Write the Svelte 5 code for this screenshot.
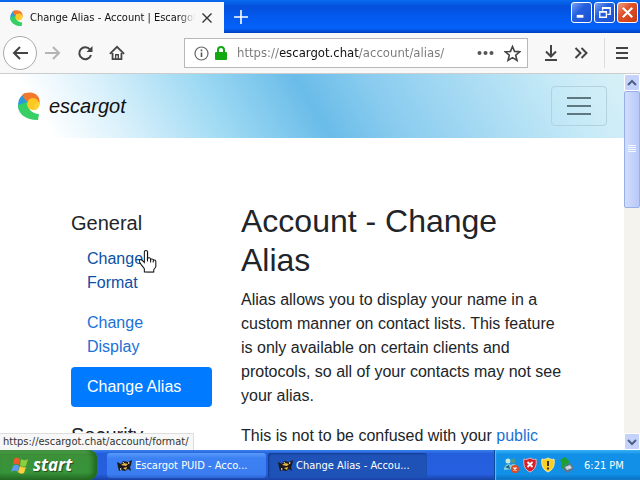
<script lang="ts">
  type Task = { title: string; active: boolean };
  type NavLink = { label: string; href: string; state: string };

  const tasks: Task[] = [
    { title: 'Escargot PUID - Acco...', active: false },
    { title: 'Change Alias - Accou...', active: true }
  ];

  const links: NavLink[] = [
    { label: 'Change Format', href: '#format', state: 'hovered' },
    { label: 'Change Display', href: '#display', state: '' },
    { label: 'Change Alias', href: '#alias', state: 'current' }
  ];

  let address = $state('https://escargot.chat/account/alias/');
</script>

{#snippet logo()}
  <svg class="logo" viewBox="0 0 22 28" aria-hidden="true">
    <path d="M0 14C0 7 3 3 8 1l4 6-3 8-8 3z" fill="#2b9bdc" />
    <path d="M4 3C9-1 18 0 21 6l1 6-6-2c-2-2-5-2-8-1z" fill="#f2792c" />
    <path d="M0 13c0 8 6 15 20 15l1-6c-4 0-7-2-9-4-2-3-3-5-3-8z" fill="#35cf63" />
    <circle cx="15" cy="12" r="6" fill="#fdc820" />
    <path d="M15 18c4 1 7-3 7-8l-5 1z" fill="#fcd238" />
  </svg>
{/snippet}

<div class="desktop">
  <header class="titlebar">
    <div class="tab">
      {@render logo()}
      <span class="tab-title">Change Alias - Account | Escargot</span>
      <button class="plain" aria-label="Close tab">
        <svg width="12" height="12" viewBox="0 0 12 12"><path d="M1.500 1.500l9 9M10.500 1.500l-9 9" stroke="#333" stroke-width="1.4" /></svg>
      </button>
    </div>
    <button class="plain new-tab" aria-label="New tab">
      <svg width="14" height="14" viewBox="0 0 14 14"><path d="M7 0v14M0 7h14" stroke="#fff" stroke-width="1.6" /></svg>
    </button>
    <div class="window-buttons">
      <button aria-label="Minimize"><svg viewBox="0 0 20 20"><path d="M5 14h7" stroke="#fff" stroke-width="3" /></svg></button>
      <button aria-label="Restore">
        <svg viewBox="0 0 20 20" fill="none" stroke="#fff" stroke-width="1.4">
          <path d="M8 8V5h8v7h-3M8 5.5h8" />
          <path d="M5 9h7v6H5zM5 9.500h7" />
        </svg>
      </button>
      <button class="close" aria-label="Close"><svg viewBox="0 0 20 20"><path d="M5 5l10 10M15 5L5 15" stroke="#fff" stroke-width="2.2" /></svg></button>
    </div>
  </header>

  <div class="toolbar">
    <button class="plain back" aria-label="Back">
      <svg width="18" height="16" viewBox="0 0 18 16"><path d="M17 8H3M9 2L3 8l6 6" /></svg>
    </button>
    <button class="plain dim" aria-label="Forward">
      <svg width="16" height="16" viewBox="0 0 16 16"><path d="M0 8h14M8 2l6 6-6 6" /></svg>
    </button>
    <button class="plain" aria-label="Reload">
      <svg width="16" height="16" viewBox="0 0 16 16">
        <path d="M13 4.500A6 6 0 1 0 14 10" />
        <path d="M15.500 1v6h-6z" fill="#444" stroke="none" />
      </svg>
    </button>
    <button class="plain" aria-label="Home">
      <svg width="16" height="18" viewBox="0 0 18 18">
        <path d="M1 10L9 2l8 8M4 9v7h10V9" />
        <path d="M7.500 16v-5h3v5" stroke-width="1.500" />
      </svg>
    </button>
    <div class="address">
      <svg width="15" height="15" viewBox="0 0 15 15" aria-hidden="true">
        <circle cx="7.500" cy="7.500" r="6.500" stroke="#666" stroke-width="1.200" fill="none" />
        <path d="M7.500 6.500v4.500M7.500 3.500v1.800" stroke="#555" stroke-width="1.600" />
      </svg>
      <svg width="12" height="14" viewBox="0 0 12 14" aria-hidden="true">
        <path d="M3 7V4a3 3 0 0 1 6 0v3" stroke="#12a812" stroke-width="2" fill="none" />
        <rect x="0" y="6" width="12" height="8" rx="1" fill="#12a812" />
      </svg>
      <input type="text" aria-label="Address" bind:value={address} />
      <button class="plain" aria-label="Page actions">
        <svg width="17" height="6" viewBox="0 0 17 6"><g fill="#555" stroke="none"><circle cx="2.500" cy="3" r="2" /><circle cx="8.500" cy="3" r="2" /><circle cx="14.500" cy="3" r="2" /></g></svg>
      </button>
      <button class="plain" aria-label="Bookmark this page">
        <svg width="17" height="17" viewBox="0 0 17 17"><path stroke-width="1.600" d="M8.500 1.500l2 4.900 5.200.400-4 3.400 1.300 5.200-4.500-2.800L4 15.400l1.300-5.200-4-3.400 5.200-.4z" /></svg>
      </button>
    </div>
    <button class="plain" aria-label="Downloads">
      <svg width="14" height="16" viewBox="0 0 14 16"><path d="M7 0v11M2 6.500l5 5 5-5M1 15h12" /></svg>
    </button>
    <button class="plain" aria-label="More tools">
      <svg width="14" height="14" viewBox="0 0 14 14"><path d="M1.500 2l5 5-5 5M7.500 2l5 5-5 5" /></svg>
    </button>
    <button class="plain menu" aria-label="Menu">
      <svg width="12" height="14" viewBox="0 0 12 14"><path d="M0 2h12M0 7h12M0 12h12" /></svg>
    </button>
  </div>

  <div class="viewport">
    <div class="page">
      <nav class="navbar">
        <a class="brand" href="#home">{@render logo()}<span>escargot</span></a>
        <button class="toggler" aria-label="Toggle navigation">
          <svg width="24" height="20" viewBox="0 0 24 20"><path d="M0 2h24M0 10h24M0 18h24" stroke="#5f7880" stroke-width="2" /></svg>
        </button>
      </nav>
      <div class="container">
        <aside>
          <h5>General</h5>
          {#each links as link}
            <a class={['nav-link', link.state]} href={link.href}>{link.label}</a>
          {/each}
          <h5 class="next">Security</h5>
        </aside>
        <main>
          <h2>Account - Change Alias</h2>
          <p>
            Alias allows you to display your name in a custom manner on contact lists. This feature is only
            available on certain clients and protocols, so all of your contacts may not see your alias.
          </p>
          <p>This is not to be confused with your <a href="#public">public</a></p>
        </main>
      </div>
      <div class="status">https://escargot.chat/account/format/</div>
    </div>
    <div class="scrollbar">
      <button aria-label="Scroll up"><svg viewBox="0 0 14 14"><path d="M3 9l4-4 4 4" /></svg></button>
      <div class="thumb"><svg width="8" height="8" viewBox="0 0 8 8"><path d="M0 .5h8M0 2.500h8M0 4.500h8M0 6.500h8" stroke="#f4f8ff" /></svg></div>
      <button class="down" aria-label="Scroll down"><svg viewBox="0 0 14 14"><path d="M3 5l4 4 4-4" /></svg></button>
    </div>
  </div>

  <footer class="taskbar">
    <button class="start">
      <svg width="18" height="17" viewBox="0 0 18 17" aria-hidden="true">
        <path d="M3 2c2-2 4-1 6 0L8 8C6 7 4 6 2 8z" fill="#ee5a2a" />
        <path d="M10 2c2 1 4 2 7 0l-2 7c-2 1-4 1-6-1z" fill="#8ccf3c" />
        <path d="M2 9c2-2 4-1 6 0l-1 6c-2-1-4-2-7 0z" fill="#5f9bf5" />
        <path d="M9 9c2 1 4 2 6 1l-2 6c-2 1-4 1-6-1z" fill="#fbd03c" />
      </svg>
      <span>start</span>
    </button>
    <div class="tasks">
      {#each tasks as task}
        <button class="task" class:active={task.active}>
          <svg width="15" height="13" viewBox="0 0 15 13" aria-hidden="true">
            <path d="M0 3l4 2 2-3 5 1 4-2-1 5-1 2 1 4-3-2-3 2-4-1-2 1-1-4z" fill="#1b1a18" />
            <path d="M4 6l3-2 4 1-2 2zM6 9l4-1-1 3z" fill="#e9b64a" />
            <path d="M11 3l2 1-2 1zM3 9l2 1-2 1zM5 4l2-1v1z" fill="#f5ead0" />
          </svg>
          <span>{task.title}</span>
        </button>
      {/each}
    </div>
    <div class="tray">
      <svg width="16" height="16" viewBox="0 0 16 16" aria-hidden="true">
        <circle cx="5" cy="4" r="2.500" fill="#c7e8d8" />
        <circle cx="10" cy="4" r="2.500" fill="#4d9a8a" />
        <path d="M1 13c0-7 8-8 9-1zM7 10c1-4 6-4 7 0z" fill="#8fd0d8" />
        <path d="M2 10l4-2 1 4z" fill="#235b78" />
        <circle cx="12" cy="12" r="4" fill="#e04a22" />
        <path d="M10.500 10.500l3 3M13.500 10.500l-3 3" stroke="#fff" stroke-width="1.300" />
      </svg>
      <svg width="14" height="16" viewBox="0 0 14 16" aria-hidden="true">
        <path d="M7 1c2 1 4 2 6 1 1 6-1 11-6 13C2 13 0 8 1 2c2 1 4 0 6-1z" fill="#d8202a" stroke="#f0b0b0" />
        <path d="M4.500 5l5 5M9.500 5l-5 5" stroke="#fff" stroke-width="1.800" />
      </svg>
      <svg width="14" height="16" viewBox="0 0 14 16" aria-hidden="true">
        <path d="M7 1c2 1 4 2 6 1 1 6-1 11-6 13C2 13 0 8 1 2c2 1 4 0 6-1z" fill="#fbcf22" stroke="#f5eaa8" />
        <path d="M7 4v5M7 10.500v2" stroke="#333" stroke-width="2" />
      </svg>
      <svg width="15" height="16" viewBox="0 0 15 16" aria-hidden="true">
        <path d="M3 10l9-4 3 6-8 4z" fill="#62748c" />
        <path d="M6 10l5-2 2 3-5 2z" fill="#cdd6e0" />
        <path d="M1 3l5-3 4 4-1 5-3-2-1 5-3-1 1-5z" fill="#1fa02e" />
      </svg>
      <time>6:21 PM</time>
    </div>
  </footer>

  <svg class="pointer" width="18" height="24" viewBox="0 0 17 23" aria-hidden="true">
    <path d="M7 22v-3l-3-4-3-4c0-2 2-2 3-1l2 2V2c0-2 3-2 3 0v6c1-1 2-1 3 1 1-1 2 0 2 1 1-1 2 0 2 1v5l-2 3v3z" fill="#888" opacity="0.500" />
    <path d="M5 21v-3l-3-4-2-3c0-2 2-2 3-1l2 2V2c0-2 3-2 3 0v6c1-1 3-1 3 1 1-1 3 0 3 1 1-1 2 0 2 1v5l-2 3v2z" fill="#fff" stroke="#111" />
    <path d="M8 7v4M11 9v3M13.500 10v2" stroke="#111" />
  </svg>
</div>

<style>
  :global(body) {
    margin: 0;
  }

  .desktop {
    position: relative;
    display: flex;
    flex-direction: column;
    height: 100vh;
    overflow: hidden;
    font-family: 'DejaVu Sans Condensed', Tahoma, sans-serif;
    font-size: 11px;
  }

  button {
    font: inherit;
    padding: 0;
    box-sizing: border-box;
  }

  svg {
    display: block;
    flex-shrink: 0;
  }

  .plain {
    display: grid;
    place-items: center;
    border: 0;
    background: none;
  }

  /* Title bar */
  .titlebar {
    display: flex;
    height: 33px;
    flex-shrink: 0;
    background: linear-gradient(#0a6cf0, #0450dc 20%, #0359ee 50%, #0462fb 85%, #003fc0);
  }

  .tab {
    display: flex;
    align-items: center;
    gap: 6px;
    width: 224px;
    box-sizing: border-box;
    margin-top: 2px;
    padding: 0 11px 0 9px;
    background: #f8f8f8;
  }

  .tab .logo {
    width: 15px;
    height: 16px;
  }

  .tab-title {
    flex: 1;
    min-width: 0;
    overflow: hidden;
    white-space: nowrap;
    color: #111;
    mask-image: linear-gradient(to right, #000 90%, transparent);
  }

  .new-tab {
    width: 34px;
  }

  .window-buttons {
    display: flex;
    gap: 2px;
    margin: 2px 2px 0 auto;
  }

  .window-buttons button {
    width: 21px;
    height: 21px;
    border: 1px solid #fff;
    border-radius: 3px;
    background: linear-gradient(135deg, #7aa2f5, #2560e0 40%, #1a4fd0);
  }

  .window-buttons .close {
    background: linear-gradient(135deg, #f0a080, #e0522a 40%, #c83a10);
  }

  /* Browser toolbar */
  .toolbar {
    display: flex;
    align-items: center;
    height: 41px;
    box-sizing: border-box;
    flex-shrink: 0;
    gap: 16px;
    padding: 0 12px 0 3px;
    border-bottom: 1px solid #ccc;
    background: #f8f8f8;
  }

  .toolbar .plain svg {
    fill: none;
    stroke: #444;
    stroke-width: 2;
  }

  .toolbar .dim svg {
    stroke: #b5b5b5;
  }

  .toolbar .back {
    width: 34px;
    height: 34px;
    margin-right: -8px;
    border: 1px solid #aaa;
    border-radius: 50%;
    background: #fff;
  }

  .address {
    flex: 1;
    min-width: 0;
    display: flex;
    align-items: center;
    gap: 6px;
    height: 30px;
    box-sizing: border-box;
    margin-left: 43px;
    padding: 0 6px 0 9px;
    border: 1px solid #b8b8b8;
    background: #fff;
  }

  .address input {
    flex: 1;
    min-width: 0;
    margin-left: 4px;
    padding: 0;
    border: 0;
    outline: 0;
    font-family: inherit;
    font-size: 13px;
    line-height: 20px;
    color: transparent;
    /* the host name is darker than the rest of the address */
    background: linear-gradient(to right, #777 43px, #111 43px, #111 122px, #777 122px);
    background-clip: text;
  }

  .address .plain {
    margin-left: 4px;
  }

  .menu {
    height: 30px;
    padding-left: 11px;
    border-left: 1px solid #ddd;
  }

  /* Web page */
  .viewport {
    display: flex;
    flex: 1;
    min-height: 0;
  }

  .page {
    position: relative;
    flex: 1;
    min-width: 0;
    overflow: hidden;
    background: #fff;
    color: #212529;
    font-family: 'Liberation Sans', Arial, sans-serif;
    font-size: 16px;
    line-height: 24px;
  }

  .navbar {
    display: flex;
    align-items: center;
    justify-content: space-between;
    padding: 12px 17px 12px 18px;
    background: linear-gradient(60deg, #fff 8%, #d8f0fb 20%, #9dd9f3 35%, #6abce9 50%, #8accef 61%, #a8dbf3 75%, #c6eaf7 89%, #d8f0f7);
  }

  .brand {
    display: flex;
    align-items: center;
    gap: 9px;
    color: #111;
    font-size: 20px;
    font-style: italic;
    text-decoration: none;
  }

  .brand .logo {
    width: 22px;
    height: 28px;
  }

  .toggler {
    display: grid;
    place-items: center;
    width: 56px;
    height: 40px;
    border: 1px solid #b4d2dc;
    border-radius: 4px;
    background: none;
  }

  .container {
    display: grid;
    grid-template-columns: 141px 1fr;
    gap: 29px;
    max-width: 496px;
    margin: 0 auto;
    padding: 64px 16px 0 30px;
  }

  aside {
    padding-top: 9px;
  }

  h2,
  h5 {
    margin: 0;
    font-weight: 400;
  }

  h2 {
    margin-bottom: 8px;
    font-size: 32px;
    line-height: 39px;
  }

  h5 {
    margin-bottom: 4px;
    font-size: 20px;
    line-height: 24px;
  }

  .next {
    margin-top: 16px;
  }

  a {
    color: #1a72d8;
    text-decoration: none;
  }

  .nav-link {
    display: block;
    padding: 8px 16px;
  }

  .hovered {
    color: #0a50a5;
  }

  .current {
    border-radius: 4px;
    background: #007bff;
    color: #fff;
  }

  p {
    margin: 0 0 16px;
  }

  .status {
    position: absolute;
    left: 0;
    bottom: 0;
    padding: 0 4px 0 3px;
    border: 1px solid #ddd;
    border-width: 1px 1px 0 0;
    background: #f7f7f7;
    color: #333;
    font-family: 'DejaVu Sans Condensed', Tahoma, sans-serif;
    font-size: 11px;
    line-height: 16px;
  }

  .scrollbar {
    display: flex;
    flex-direction: column;
    width: 16px;
    background: #f4f3ee;
  }

  .scrollbar button {
    height: 17px;
    flex-shrink: 0;
    border: 1px solid #fff;
    border-radius: 2px;
    background: #c5d3fb;
  }

  .scrollbar button path {
    fill: none;
    stroke: #4d6185;
    stroke-width: 2;
  }

  .scrollbar .down {
    margin-top: auto;
  }

  .thumb {
    display: grid;
    place-items: center;
    height: 31%;
    box-sizing: border-box;
    border: 1px solid #98b0e8;
    border-radius: 2px;
    background: linear-gradient(to right, #d2defe, #b8c8f8);
  }

  /* Taskbar */
  .taskbar {
    display: flex;
    height: 30px;
    flex-shrink: 0;
    background: linear-gradient(#3a80ee, #245edb 12%, #2660e0 80%, #1941a5);
    color: #fff;
  }

  .start {
    display: flex;
    align-items: center;
    gap: 4px;
    width: 97px;
    padding-left: 11px;
    border: 0;
    border-radius: 0 8px 8px 0;
    background: linear-gradient(#5fae5c, #3c9038 15%, #37943a 75%, #256a26);
    box-shadow: inset -4px 0 5px #22681f;
    color: #fff;
    font-family: 'Open Sans', sans-serif;
    font-size: 17px;
    font-style: italic;
    font-weight: 700;
    line-height: 24px;
    text-shadow: 1px 1px 1px #224a1c;
  }

  .tasks {
    display: flex;
    flex: 1;
    min-width: 0;
    gap: 2px;
    padding: 3px 0 2px 10px;
  }

  .task {
    display: flex;
    align-items: center;
    gap: 3px;
    flex: 0 1 159px;
    min-width: 0;
    padding-left: 10px;
    border: 0;
    border-radius: 3px;
    background: linear-gradient(#5a9cf8, #3c81f3 20%, #3a7df0 85%, #2c64d4);
    color: #fff;
    white-space: nowrap;
  }

  .task.active {
    background: #1e52b7;
    box-shadow: inset 1px 1px 2px #123a8c;
  }

  .tray {
    display: flex;
    align-items: center;
    gap: 4px;
    width: 146px;
    box-sizing: border-box;
    padding-left: 8px;
    border-left: 1px solid #0a4a9c;
    background: linear-gradient(#35b0f4, #1290e8 15%, #1190e8 80%, #0a6fc0);
    box-shadow: inset 1px 0 1px #5cc0f8;
  }

  .tray time {
    margin-left: 6px;
  }

  .pointer {
    position: absolute;
    left: 139px;
    top: 250px;
  }
</style>
